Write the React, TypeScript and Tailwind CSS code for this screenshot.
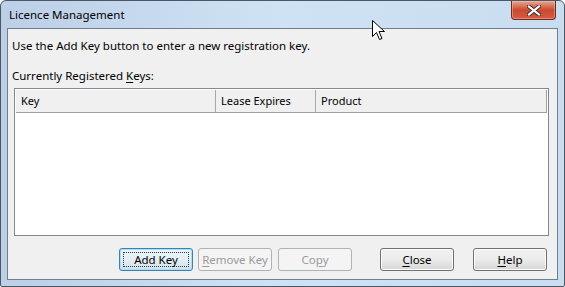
import React from "react";

const font = { fontFamily: '"Noto Sans", "Open Sans", sans-serif' };

function Btn({
  children,
  kind,
  className,
}: {
  children: React.ReactNode;
  kind: "default" | "normal" | "disabled";
  className?: string;
}) {
  if (kind === "disabled") {
    return (
      <div
        className={
          "w-[74px] h-[23px] rounded-[3px] border border-[#adb2b5] bg-[#f4f4f4] text-[#9a9a9a] text-[11.5px] flex items-center justify-center " +
          (className ?? "")
        }
      >
        {children}
      </div>
    );
  }
  if (kind === "default") {
    return (
      <div
        className={
          "w-[74px] h-[23px] rounded-[3px] border border-[#3c7fb1] bg-gradient-to-b from-[#eaf6fd] via-[#e4eef4] to-[#cfe0ea] shadow-[inset_0_0_0_1px_#a8e0f7] text-black text-[11.5px] flex items-center justify-center p-[3px] " +
          (className ?? "")
        }
      >
        <div className="w-full h-full border border-dotted border-[#333] flex items-center justify-center">
          {children}
        </div>
      </div>
    );
  }
  return (
    <div
      className={
        "w-[74px] h-[23px] rounded-[3px] border border-[#707070] bg-gradient-to-b from-[#f2f2f2] via-[#ebebeb] to-[#d6d6d6] shadow-[inset_0_0_0_1px_#fcfcfc] text-black text-[11.5px] flex items-center justify-center " +
        (className ?? "")
      }
    >
      {children}
    </div>
  );
}

export default function App() {
  return (
    <div className="w-[565px] h-[287px] relative overflow-hidden bg-white" style={font}>
      <div className="w-full h-full flex flex-col rounded-t-[6px] rounded-b-[2px] border border-[#4a5866] bg-gradient-to-r from-[#bccfe6] via-[#cfe2f5] to-[#c9dcf0]">
        {/* title bar */}
        <div className="h-[27px] flex items-start shrink-0">
          <div className="pl-[8px] pt-[6px] text-[11.5px] leading-[16px] text-black">Licence Management</div>
          <div className="ml-auto mr-[8px] w-[45px] h-[19px] rounded-b-[4px] border border-t-0 border-[#6b2a22] bg-gradient-to-b from-[#e7a591] via-[#c9492f] to-[#d65b40] shadow-[inset_0_0_0_1px_rgba(255,200,180,0.45)] flex items-center justify-center">
            <svg width="14" height="11" viewBox="0 0 14 11">
              <path d="M2 1.5 L12 9.5 M12 1.5 L2 9.5" stroke="#3a2a28" strokeWidth="4" strokeLinecap="square" />
              <path d="M2 1.5 L12 9.5 M12 1.5 L2 9.5" stroke="#ffffff" strokeWidth="2.2" strokeLinecap="square" />
            </svg>
          </div>
        </div>
        {/* frame */}
        <div className="flex-1 px-[6px] pb-[6px] flex">
          <div className="flex-1 border border-[#6e7f90] bg-[#f0f0f0] flex flex-col">
            <div className="pl-[4px] mt-[9px] text-[11.5px] leading-[16px] text-black">
              Use the Add Key button to enter a new registration key.
            </div>
            <div className="pl-[4px] mt-[14px] text-[11.5px] leading-[16px] text-black">
              Currently Registered <span className="underline underline-offset-2">K</span>eys:
            </div>
            <div className="mt-[4px] ml-[6px] mr-[8px] h-[148px] border border-[#828790] bg-white p-[1px] flex flex-col">
              <div className="h-[23px] bg-[#f0f0f0] border-b border-r border-[#a0a0a0] flex text-[11px] text-black">
                <div className="w-[200px] border-r border-[#a8a8a8] pl-[5px] flex items-center">Key</div>
                <div className="w-[100px] border-r border-[#a8a8a8] pl-[5px] flex items-center">Lease Expires</div>
                <div className="flex-1 pl-[5px] flex items-center">Product</div>
              </div>
            </div>
            <div className="mt-[12px] flex justify-end pr-[10px]">
              <Btn kind="default">Add Key</Btn>
              <Btn kind="disabled" className="ml-[5px]">
                <span className="underline underline-offset-2">R</span>emove Key
              </Btn>
              <Btn kind="disabled" className="ml-[6px]">
                Co<span className="underline underline-offset-2">p</span>y
              </Btn>
              <Btn kind="normal" className="ml-[28px]">
                <span className="underline underline-offset-2">C</span>lose
              </Btn>
              <Btn kind="normal" className="ml-[19px]">
                <span className="underline underline-offset-2">H</span>elp
              </Btn>
            </div>
          </div>
        </div>
      </div>
      {/* mouse cursor */}
      <svg className="absolute left-[372px] top-[20px]" width="14" height="21" viewBox="0 0 14 21">
        <path
          d="M0.5 0.5 L0.5 16.5 L4.5 12.5 L7.5 19.5 L10 18.5 L7 11.5 L12.5 11.5 Z"
          fill="#ffffff"
          stroke="#000000"
          strokeWidth="1"
          strokeLinejoin="miter"
        />
      </svg>
    </div>
  );
}
